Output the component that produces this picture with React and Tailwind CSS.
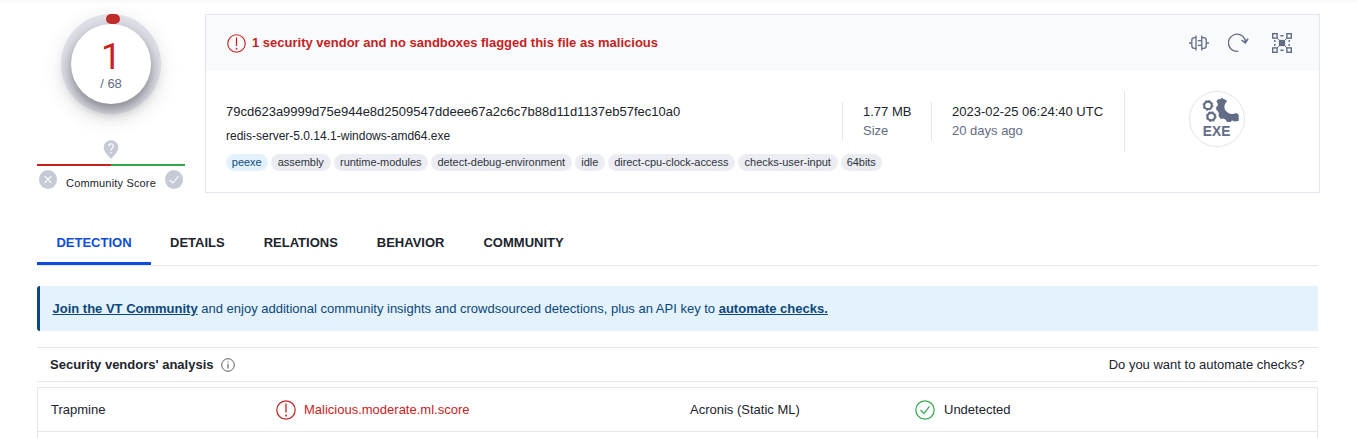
import React from "react";

function AlertIcon({ size = 20 }) {
  return (
    <svg width={size} height={size} viewBox="0 0 20 20" fill="none" stroke="currentColor" className="shrink-0">
      <circle cx="10" cy="10" r="9.2" strokeWidth="1.2" />
      <path d="M10 3.6V12.6" strokeWidth="1.3" />
      <path d="M10 14.6V16.4" strokeWidth="1.5" />
    </svg>
  );
}

function CheckIcon() {
  return (
    <svg width="20" height="20" viewBox="0 0 20 20" fill="none" stroke="currentColor" className="shrink-0">
      <circle cx="10" cy="10" r="9.2" strokeWidth="1.2" />
      <path d="M5.6 10L9 13.6L14.4 6.4" strokeWidth="1.3" />
    </svg>
  );
}

function InfoIcon() {
  return (
    <svg width="14" height="14" viewBox="0 0 14 14" fill="none" stroke="currentColor" className="shrink-0 text-[#5a5d63]">
      <circle cx="7" cy="7" r="6.3" strokeWidth="1" />
      <path d="M7 5.8V10.6M7 3.4V4.6" strokeWidth="1.1" />
    </svg>
  );
}

function SimilarIcon() {
  return (
    <svg width="20" height="16" viewBox="0 0 20 16" fill="none" stroke="currentColor" strokeWidth="1.3">
      <path d="M0 8H2.6M17.4 8H20" />
      <path d="M7 0.6V15.4M7 2.6H5.4Q2.8 2.6 2.8 5.2V10.8Q2.8 13.4 5.4 13.4H7" />
      <path d="M12.8 0.6V15.4M12.8 2.6H14.6Q17.2 2.6 17.2 5.2V10.8Q17.2 13.4 14.6 13.4H12.8" />
      <path d="M8.8 5.6H12.8M8.8 10.4H12.8" />
    </svg>
  );
}

function ReanalyzeIcon() {
  return (
    <svg width="21" height="20" viewBox="0 0 21 20" fill="none" stroke="currentColor" strokeWidth="1.3">
      <path d="M10.3 18.4H9.4A8.6 8.6 0 1 1 17.6 9.2" />
      <path d="M13.6 7.2L17.4 9.8L20 5.6" strokeWidth="1.6" />
    </svg>
  );
}

function GraphIcon() {
  return (
    <svg width="20" height="20" viewBox="0 0 20 20" fill="none" stroke="currentColor" strokeWidth="1.4">
      <rect x="0.7" y="0.7" width="4.4" height="4.4" />
      <rect x="14.9" y="0.7" width="4.4" height="4.4" />
      <rect x="0.7" y="14.9" width="4.4" height="4.4" />
      <rect x="14.9" y="14.9" width="4.4" height="4.4" />
      <path d="M8.4 2.8H11.6M8.4 17.2H11.6M2.8 7V9M2.8 11V13M17.2 7V9M17.2 11V13" />
      <path d="M5 5L15 15M15 5L5 15" strokeWidth="1" />
      <rect x="6.9" y="6.9" width="6.2" height="6.2" fill="currentColor" stroke="none" />
    </svg>
  );
}

function ExeIcon() {
  return (
    <svg width="56" height="56" viewBox="0 0 56 56" fill="none" className="font-['Liberation_Sans',sans-serif]">
      <circle cx="28" cy="28" r="27.5" fill="#fff" stroke="#e1e4ec" />
      <g stroke="#626c85" fill="none">
        <circle cx="19" cy="14.4" r="3.8" strokeWidth="2.2" />
        <circle cx="19" cy="14.4" r="5" strokeWidth="0.9" strokeDasharray="1.9 2.03" />
        <circle cx="22.2" cy="25.6" r="3.8" strokeWidth="2.2" />
        <circle cx="22.2" cy="25.6" r="5" strokeWidth="0.9" strokeDasharray="1.9 2.03" />
      </g>
      <path
        d="M31.2 8.2L33 6.8L34.6 8L37.6 9.2L37.8 10.4C35 13 34.6 17 37 20C39.6 23.3 43.6 23.8 47.2 22L49.6 23.4L49.8 29.8L46 30.6L43 29.6L41.6 31L38 31L36.8 28.8L34.4 27.4L31.8 28L29.4 24.8L30 22.4L28.4 19.8L27.2 18.8L27.2 16L28.8 14.4L28.8 12.4L27.4 10.4L28.8 8.2Z"
        fill="#626c85"
      />
      <text x="13.8" y="45" fontSize="15" fontWeight="700" textLength="27.5" lengthAdjust="spacingAndGlyphs" fill="#626c85">EXE</text>
    </svg>
  );
}

function ScorePanel() {
  return (
    <div className="flex w-[148px] shrink-0 flex-col items-center">
      <div className="relative flex size-[100px] items-center justify-center rounded-full bg-[#dfe0e8] shadow-[0_5px_20px_rgba(60,60,66,0.12)]">
        <div className="flex size-20 flex-col items-center rounded-full bg-white pt-[15px] shadow-[0_6px_14px_rgba(30,30,34,0.5)]">
          <span className="font-[Roboto,sans-serif] text-[36px] leading-[36px] text-[#c5221f]">1</span>
          <span className="mt-[2px] text-[13px] leading-[14px] text-[#626c85]">/ 68</span>
        </div>
        <span className="absolute top-0 left-[45px] h-[10px] w-[14px] rounded-[5px] bg-[#c02b2b]" />
      </div>
      <svg width="16" height="20" viewBox="0 0 16 20" className="mt-[26px]">
        <path d="M8 0.2A7.2 7.2 0 0 1 15.3 7.5C15.3 11.6 11 15.6 8 19C5 15.6 0.7 11.6 0.7 7.5A7.2 7.2 0 0 1 8 0.2Z" fill="#c6cad6" />
        <path d="M5.6 6.2C5.6 3 10.4 3 10.4 6.1C10.4 8.2 8 8.2 8 10.6M8 12V13.6" fill="none" stroke="#fff" strokeWidth="1.2" />
      </svg>
      <div className="mt-[4px] flex h-[2px] w-full">
        <div className="w-1/2 bg-[#c5221f]" />
        <div className="w-1/2 bg-[#34a94b]" />
      </div>
      <div className="mt-[4px] flex w-full items-start justify-between px-[2px]">
        <svg width="18" height="19" viewBox="0 0 18 19">
          <ellipse cx="9" cy="9.5" rx="9" ry="9.5" fill="#c6cad6" />
          <path d="M5.7 6.2L12.3 12.8M12.3 6.2L5.7 12.8" stroke="#fff" strokeWidth="1.1" />
        </svg>
        <span className="mt-[6px] text-[11px] leading-[14px] tracking-[0.17px] whitespace-nowrap text-[#20242c]">Community Score</span>
        <svg width="18" height="19" viewBox="0 0 18 19">
          <ellipse cx="9" cy="9.5" rx="9" ry="9.5" fill="#c6cad6" />
          <path d="M4.6 9.8L7.9 13L13.4 6.2" fill="none" stroke="#fff" strokeWidth="1.1" />
        </svg>
      </div>
    </div>
  );
}

const tags = [
  ["peexe", "w-[41.5px]"],
  ["assembly", "w-[59.5px]"],
  ["runtime-modules", "w-[93.5px]"],
  ["detect-debug-environment", "w-[140.5px]"],
  ["idle", "w-[29.5px]"],
  ["direct-cpu-clock-access", "w-[126.5px]"],
  ["checks-user-input", "w-[99.5px]"],
  ["64bits", "w-[40.5px]"],
];

function FileCard() {
  return (
    <div className="h-[179px] w-[1115px] shrink-0 border border-[#e3e6ee]">
      <div className="flex h-14 items-center justify-between bg-[#f9fafc] pr-[27px] pl-[21px]">
        <div className="flex items-center gap-[6px] text-[#c5221f]">
          <AlertIcon size={19} />
          <span className="text-[13px] font-bold">1 security vendor and no sandboxes flagged this file as malicious</span>
        </div>
        <div className="flex items-center text-[#626c85]">
          <SimilarIcon />
          <span className="ml-[19px]"><ReanalyzeIcon /></span>
          <span className="ml-[23px]"><GraphIcon /></span>
        </div>
      </div>
      <div className="flex pl-5">
        <div className="w-[616px] pt-[32px]">
          <div className="text-[13px] leading-[18px] text-[#20242c]">79cd623a9999d75e944e8d2509547ddeee67a2c6c7b88d11d1137eb57fec10a0</div>
          <div className="mt-[7px] text-[12px] leading-[17px] text-[#20242c]">redis-server-5.0.14.1-windows-amd64.exe</div>
          <div className="mt-[9px] flex gap-[3.5px] text-[11px] leading-[17px] tracking-[-0.03px]">
            {tags.map(([label, width], i) => (
              <span
                key={label}
                className={`${width} shrink-0 rounded-full text-center whitespace-nowrap ${i === 0 ? "bg-[#e3f2fd] text-[#0b4a7c]" : "bg-[#ebedf3] text-[#30343d]"}`}
              >
                {label}
              </span>
            ))}
          </div>
        </div>
        <div className="mt-[31px] h-[39px] w-[89px] border-l border-[#e3e6ee] pl-5 text-[13px] leading-[19px]">
          <div className="text-[#20242c]">1.77 MB</div>
          <div className="text-[#626c85]">Size</div>
        </div>
        <div className="mt-[31px] h-[39px] w-[193px] border-l border-[#e3e6ee] pl-5 text-[13px] leading-[19px] whitespace-nowrap">
          <div className="text-[#20242c]">2023-02-25 06:24:40 UTC</div>
          <div className="text-[#626c85]">20 days ago</div>
        </div>
        <div className="mt-5 flex h-[61px] flex-1 border-l border-[#e3e6ee] pl-[64px]">
          <ExeIcon />
        </div>
      </div>
    </div>
  );
}

const tabs = ["DETAILS", "RELATIONS", "BEHAVIOR", "COMMUNITY"];

export default function App() {
  return (
    <div className="h-[438px] w-[1357px] overflow-hidden bg-white font-['Liberation_Sans',Arial,sans-serif] text-[13px] text-[#20242c]">
      <div className="h-[5px] bg-gradient-to-b from-[#f8f8f8] to-white" />
      <div className="flex gap-5 pt-[9px] pl-[37px]">
        <ScorePanel />
        <FileCard />
      </div>

      <div className="mt-[27px] ml-[37px] w-[1281px]">
        <nav className="flex h-[46px] gap-[39px] border-b border-[#e5e7eb] leading-[45px] font-bold">
          <span className="mr-[-20px] h-[45px] w-[114px] border-b-[3px] border-[#0b4dda] text-center text-[#0b4dda]">DETECTION</span>
          {tabs.map((t) => (
            <span key={t}>{t}</span>
          ))}
        </nav>

        <div className="mt-5 h-[45px] rounded-l-[3px] border-l-[3px] border-[#0b4778] bg-[#e3f2fd] pl-[12.5px] leading-[45px] text-[#0b4778]">
          <span className="font-bold underline">Join the VT Community</span>
          <span> and enjoy additional community insights and crowdsourced detections, plus an API key to </span>
          <span className="font-bold underline">automate checks.</span>
        </div>

        <div className="mt-4 flex h-[35px] items-center justify-between border-y border-[#e5e7eb] pr-[13.5px] pl-[13px]">
          <div className="flex items-center gap-[7px]">
            <span className="font-bold">Security vendors' analysis</span>
            <InfoIcon />
          </div>
          <span>Do you want to automate checks?</span>
        </div>

        <div className="mt-[5px] h-[60px] border border-[#e5e7eb]">
          <div className="flex h-[44px] items-center border-b border-[#e5e7eb] pl-[13px]">
            <span className="w-[225px]">Trapmine</span>
            <span className="flex w-[414px] items-center gap-2 text-[#c5221f]">
              <AlertIcon />
              Malicious.moderate.ml.score
            </span>
            <span className="w-[225px]">Acronis (Static ML)</span>
            <span className="flex items-center gap-[9px]">
              <span className="text-[#34a94b]"><CheckIcon /></span>
              Undetected
            </span>
          </div>
        </div>
      </div>
    </div>
  );
}
